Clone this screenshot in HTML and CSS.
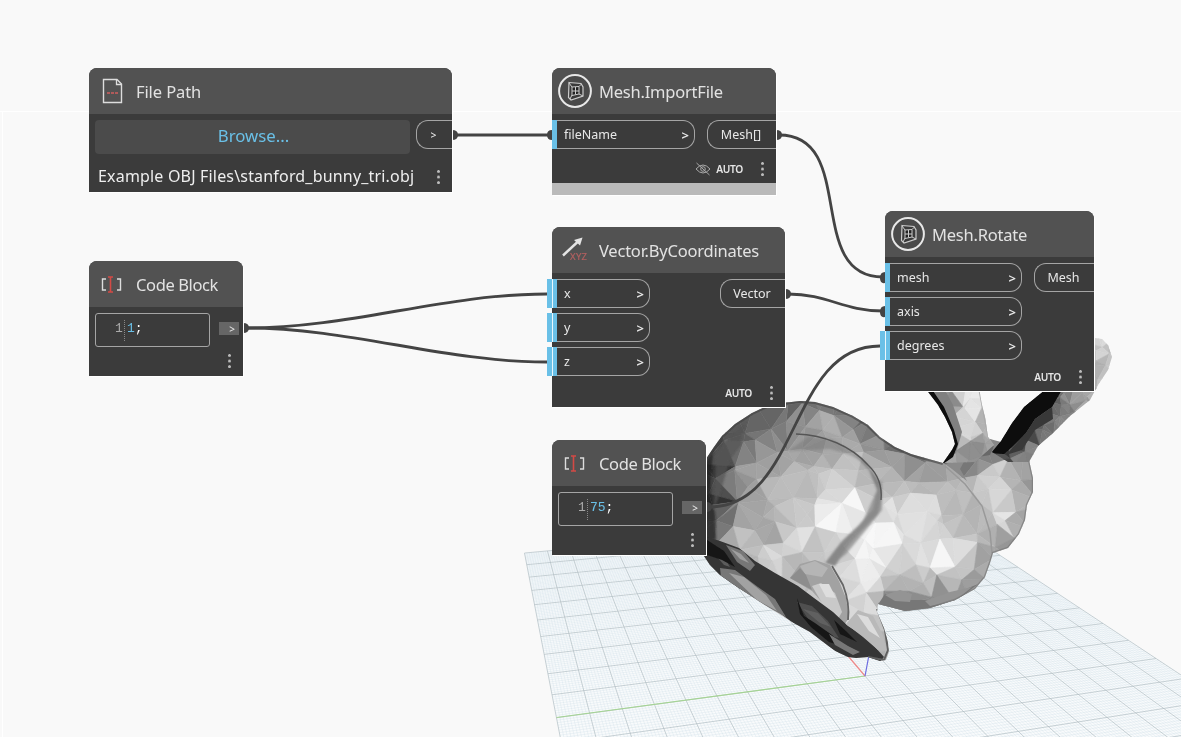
FILE: index.html
```html
<!DOCTYPE html>
<html lang="en">
<head>
<meta charset="utf-8">
<title>Mesh.Rotate</title>
<link rel="stylesheet" href="styles.css">
</head>
<body>
<main class="workspace">
  <svg class="scene" width="1181" height="737" viewBox="0 0 1181 737">
    <defs>
      <clipPath id="bodyClip"><path id="bodyPath" d="M704 462 714 447 722 436 735 424 752 413 767 406 783 403 800 401 815 402 833 407 853 416 868 425 880 437 895 447 911 454 925 458 943 463 952 450 957 446 975 442 990 439 1001 442 1015 440 1035 450 1029 460 1033 478 1033 492 1027 505 1025 520 1019 534 1008 548 993 553 990 563 985 577 975 589 955 600 930 608 905 611 890 607 878 604 877 612 884 628 888 642 889 652 886 660 880 661 868 657 856 658 848 657 835 651 810 632 790 621 760 602 740 589 720 575 710 565 704 556Z"/></clipPath>
      <clipPath id="earLClip"><path d="M925 388 979 388 982 405 985 417 988 437 994 445 975 462 943 463 952 450 955 444 952 432 945 417 938 405Z"/></clipPath>
      <clipPath id="earRClip"><path d="M1095 338 1102 339 1108 345 1112 357 1108 370 1098 385 1090 400 1070 416 1052 434 1038 446 1029 462 1008 462 992 452 1001 441 1012 423 1024 407 1045 390 1070 365Z"/></clipPath>
      <filter id="soft"><feGaussianBlur stdDeviation="0.55"/></filter>
      <filter id="softer"><feGaussianBlur stdDeviation="1.3"/></filter>
    </defs>
    <g class="guides"><path d="M0 111.5H1181M2.500 111V737"/></g>
    <g id="grid"></g>
    <g class="axes"><path class="axis-y" d="M865 676 556.500 717.500"/><path class="axis-x" d="M865 676 843 650"/><path class="axis-z" d="M865 676 869 655"/></g>
    <g filter="url(#soft)">
      <g id="body" clip-path="url(#bodyClip)"></g>
      <g clip-path="url(#bodyClip)">
        <g filter="url(#softer)">
          <path fill="#222" opacity=".75" d="M704 464 713 450 711 475 710 500 715 512 716 540 704 540Z"/>
          <path fill="#555" opacity=".7" d="M716 455 730 436 745 423 741 445 730 460 722 487 714 510Z"/>
          <path fill="#777" opacity=".45" d="M788 451 808 437 832 439 853 452 869 465 850 455 830 449Z"/>
          <path fill="#777" opacity=".8" d="M852 452 866 463 880 482 882 493 878 514 862 530 848 546 835 566 825 563 842 541 858 526 873 509 877 490 869 470Z"/>
          <path fill="#8b8b8b" opacity=".75" d="M878 488 882 480 882 510 866 530 846 554 832 565 858 532Z"/>
        </g>
        <path class="crease" d="M796 434C825 435 851 446 868 465Q883 479 881 500"/>
        <path fill="#a2a2a2" d="M790 578 800 564 815 560 830 565 839 581 846 598 849 618 842 628 829 610 812 591Z"/>
        <path fill="#b5b5b5" d="M800 566 815 561 828 568 822 577 805 574Z"/>
        <path fill="#8d8d8d" d="M790 578 800 568 806 575 812 590Z"/>
        <path fill="#c9c9c9" d="M812 586 821 583 835 593 842 612 838 619 822 603Z"/>
        <path fill="#dedede" d="M819 584 829 584 836 598 826 597Z"/>
        <path fill="none" stroke="#666" stroke-width="1.800" d="M832 566 843 585Q850 603 848 620"/>
        <path fill="#777" d="M879 603 885 594 907 600 940 600 978 584 955 602 930 610 905 613 878 609Z"/>
        <path fill="#949494" d="M885 595 900 590 912 594 910 602 895 601ZM925 601 950 592 972 587 955 601 930 606Z"/>
        <path fill="#343434" d="M704 536 720 541 739 548 755 561 775 573 798 586 814 598 833 612 848 626 867 638 884 657 879 663 848 659 808 634 777 611 755 598 720 577 704 564Z"/>
        <path fill="#777" d="M726 545 743 551 755 565 750 571 737 562Z"/>
        <path fill="#a0a0a0" d="M731 549 741 554 749 563 740 559Z"/>
        <path fill="#777" d="M720 568 735 570 758 587 775 599 786 617 764 605 740 589 721 577Z"/>
        <path fill="#a2a2a2" d="M729 573 744 577 766 595 777 611 757 600Z"/>
        <path fill="#5b5b5b" d="M709 548 719 549 730 567 724 565Z"/>
        <path fill="#4f4f4f" d="M797 602 812 606 828 621 839 638 828 636 812 625Z"/>
        <path fill="#606060" d="M803 609 818 613 831 627 820 623Z"/>
        <path fill="#171717" d="M704 538 724 551 735 567 722 560 704 554ZM797 598 800 614 811 627 829 642 843 646 832 635 815 623 804 616ZM834 620 848 633 857 642 840 634Z"/>
        <path fill="#777" d="M829 634 848 646 860 652 853 655 835 645Z"/>
        <path fill="#b9b9b9" d="M846 624 858 610 873 616 883 635 887 651 878 650 863 637Z"/>
        <path fill="#dcdcdc" d="M857 614 868 617 880 638 869 631Z"/>
        <path fill="none" stroke="#606060" stroke-width="2" d="M877 609 885 630 888 650 884 660 868 657"/>
        <path fill="#686868" d="M943 463 959 451 994 446 990 455 966 459 950 466Z"/>
        <path fill="#8a8a8a" d="M945 464 966 458 960 469 967 481 952 469Z"/>
        <path fill="none" stroke="#999" stroke-width="1.500" d="M945 466 965 484 982 506 990 532 992 553"/>
        <path class="outline" d="M704 462 714 447 722 436 735 424 752 413 767 406 783 403 800 401 815 402 833 407 853 416 868 425 880 437 895 447 911 454 925 458 943 463"/>
        <path class="rim" d="M1029 460 1033 478 1033 492 1027 505 1025 520 1019 534 1008 548 993 553 990 563 985 577 975 589 955 600 930 608 905 611 890 607 878 604"/>
      </g>
      <g id="earL" clip-path="url(#earLClip)"></g>
      <g clip-path="url(#earLClip)">
        <path fill="#808080" d="M925 388 944 388 953 405 962 432 956 453 943 463Z"/>
        <path fill="#0b0b0b" d="M925 388 931 388 944 407 954 430 958 444 953 457 940 466 950 444 938 405Z"/>
        <path fill="none" stroke="#aaa" stroke-width="3" d="M980 390 985 417 989 437 996 446"/>
      </g>
      <g id="earR" clip-path="url(#earRClip)"></g>
      <g clip-path="url(#earRClip)">
        <path fill="#0a0a0a" d="M990 453 1001 441 1012 423 1024 407 1045 388 1063 388 1052 407 1035 419 1026 433 1013 446 1004 454Z"/>
        <path fill="#383838" d="M1035 419 1052 407 1053 419 1035 430 1022 450 1006 455 1026 433Z"/>
      </g>
    </g>
    <g class="wires">
      <path d="M455 135H550"/>
      <path d="M779 135C858 135 804 277 883 277"/>
      <path d="M247 328C351 328 443 294 547 294"/>
      <path d="M247 328C351 328 443 362 547 362"/>
      <path d="M788 294C828 294 843 311 883 311"/>
      <path d="M709 507C801 507 788 346 880 346"/>
    </g>
    <g class="plugs">
      <path d="M452 130Q458 130 458 135T452 140ZM776 130Q782 130 782 135T776 140ZM243 323Q249 323 249 328T243 333ZM785 289Q791 289 791 294T785 299ZM552 130Q547 130 547 135T552 140ZM885 272Q880 272 880 278T885 283ZM885 306Q880 306 880 312T885 317ZM706 502Q712 502 712 507T706 512Z"/>
    </g>
  </svg>

  <section class="node file-path">
    <header class="head">
      <svg class="icon" width="34" height="34" viewBox="0 0 34 34"><path d="M8.500 5.500H22L26.500 10V28.500H8.500Z" fill="none" stroke="#ddd" stroke-width="1.400"/><path d="M21.500 6V10.500H26.500" fill="none" stroke="#ddd" stroke-width="1.300"/><path d="M12 19h3m1 0h3m1 0h3" stroke="#b05a5a" stroke-width="1.800"/></svg>
      <h2 class="title t-file">File Path</h2>
    </header>
    <div class="row browse-row"><button class="browse">Browse...</button><span class="port out tiny">&gt;</span></div>
    <div class="path-row"><span class="path">Example OBJ Files\stanford_bunny_tri.obj</span><i class="dots"></i></div>
  </section>

  <section class="node import-file">
    <header class="head">
      <svg class="icon" width="34" height="34" viewBox="0 0 34 34"><use href="#meshIcon"/></svg>
      <h2 class="title t-import">Mesh.ImportFile</h2>
    </header>
    <div class="row ports"><div class="ins"><span class="port in w143">fileName<b>&gt;</b></span></div><span class="port out w69">Mesh[]</span></div>
    <footer class="foot">
      <svg width="16" height="14" viewBox="0 0 16 14"><path d="M1 7Q8-1 15 7Q8 15 1 7ZM1.500 1 14.500 13" fill="none" stroke="#aaa"/><circle cx="8" cy="7" r="2.300" fill="none" stroke="#aaa"/></svg>
      <span class="auto">AUTO</span><i class="dots"></i>
    </footer>
    <div class="strip"></div>
  </section>

  <section class="node code one">
    <header class="head">
      <svg class="icon" width="34" height="34" viewBox="0 0 34 34"><use href="#codeIcon"/></svg>
      <h2 class="title t-code">Code Block</h2>
    </header>
    <div class="row code-row"><div class="editor"><span class="ln">1</span><span class="src"><em>1</em>;</span></div><span class="stub">&gt;</span></div>
    <footer class="foot"><i class="dots"></i></footer>
  </section>

  <section class="node vector">
    <header class="head">
      <svg class="icon" width="34" height="34" viewBox="0 0 34 34"><path d="M5 22.500 19.500 9" stroke="#e4e4e4" stroke-width="2.400"/><path d="M24.500 4.500 22 12.500 16 7Z" fill="#e4e4e4"/><text x="12" y="26.500" class="xyz" textLength="17">XYZ</text></svg>
      <h2 class="title t-vector">Vector.ByCoordinates</h2>
    </header>
    <div class="row ports">
      <div class="ins"><span class="port in open w98">x<b>&gt;</b></span><span class="port in open w98">y<b>&gt;</b></span><span class="port in open w98">z<b>&gt;</b></span></div>
      <span class="port out w65">Vector</span>
    </div>
    <footer class="foot"><span class="auto">AUTO</span><i class="dots"></i></footer>
  </section>

  <section class="node code two">
    <header class="head">
      <svg class="icon" width="34" height="34" viewBox="0 0 34 34"><use href="#codeIcon"/></svg>
      <h2 class="title t-code">Code Block</h2>
    </header>
    <div class="row code-row"><div class="editor"><span class="ln">1</span><span class="src"><em>75</em>;</span></div><span class="stub">&gt;</span></div>
    <footer class="foot"><i class="dots"></i></footer>
  </section>

  <section class="node rotate">
    <header class="head">
      <svg class="icon" width="34" height="34" viewBox="0 0 34 34"><use href="#meshIcon"/></svg>
      <h2 class="title t-rotate">Mesh.Rotate</h2>
    </header>
    <div class="row ports">
      <div class="ins"><span class="port in w137">mesh<b>&gt;</b></span><span class="port in w137">axis<b>&gt;</b></span><span class="port in open w137">degrees<b>&gt;</b></span></div>
      <span class="port out w60">Mesh</span>
    </div>
    <footer class="foot"><span class="auto">AUTO</span><i class="dots"></i></footer>
  </section>
</main>
<svg width="0" height="0" class="symbols">
  <symbol id="meshIcon" viewBox="0 0 34 34"><circle cx="17" cy="17" r="15.900" fill="#4a4a4a" stroke="#e8e8e8" stroke-width="2"/><path d="M11 8.500 23 9.500 25 13V22L13 26 10.500 23.500Z" fill="#3a3a3a" stroke="#ccc" stroke-width="1.200"/><path d="M14 13 21 12.500V20L14 21.500Z" fill="#222" stroke="#ccc"/><path d="M11 9 14 13M21 12.500 23.500 10M14 21 12 25M21 20 25 22M17.500 13V20.500M14 17H21" fill="none" stroke="#ccc"/></symbol>
  <symbol id="codeIcon" viewBox="0 0 34 34"><path d="M11 12H7.500V23H11M22 12H25.500V23H22" fill="none" stroke="#ddd" stroke-width="1.400"/><path d="M15.500 10V25M13 10H18M13 25H18" stroke="#d34a45" stroke-width="1.600"/></symbol>
</svg>
<script src="scene.js"></script>
</body>
</html>
```
FILE: styles.css
```css
* { box-sizing: border-box; }
body { margin: 0; background: #f9f9f9; font-family: "Noto Sans", sans-serif; color: #e6e6e6; }
.workspace { position: relative; width: 1181px; height: 737px; overflow: hidden; }
.symbols { position: absolute; }
.scene { display: block; }
.guides path { fill: none; stroke: #fff; stroke-width: 1; }
.axes path { fill: none; stroke-width: 1.2; }
.axis-y { stroke: #a5d494; }
.axis-x { stroke: #f08a8a; }
.axis-z { stroke: #6c6ce0; }
.minor { fill: none; stroke: #c3d9e2; stroke-width: .5; opacity: .5; }
.major { fill: none; stroke: #a9b8be; stroke-width: .9; opacity: .7; }
.crease { fill: none; stroke: #555; stroke-width: 1.4; }
.outline { fill: none; stroke: #444; stroke-width: 4; opacity: .65; }
.rim { fill: none; stroke: #777; stroke-width: 2.5; opacity: .7; }
.wires path { fill: none; stroke: #444; stroke-width: 2.8; }
.plugs path { fill: #444; }

.node { position: absolute; display: flex; flex-direction: column; background: #3b3b3b; border-radius: 8px 8px 0 0; box-shadow: 1px 1px 0 #fff; }
.file-path { left: 89px; top: 68px; width: 363px; height: 124px; }
.import-file { left: 552px; top: 68px; width: 224px; height: 127px; }
.one { left: 89px; top: 261px; width: 154px; height: 115px; }
.vector { left: 552px; top: 227px; width: 233px; height: 180px; }
.two { left: 552px; top: 440px; width: 154px; height: 115px; }
.rotate { left: 885px; top: 211px; width: 209px; height: 180px; }

.head { display: flex; align-items: center; gap: 7px; height: 46px; padding: 0 6px; background: #525252; border-radius: 8px 8px 0 0; }
.icon { flex: none; }
.title { margin: 1px 0 0; font-size: 16.5px; font-weight: 400; line-height: 24px; letter-spacing: -.22px; white-space: nowrap; color: #e2e2e2; }
.t-file { letter-spacing: -.1px; }
.t-code { letter-spacing: -.38px; }
.xyz { font: 9.5px "Noto Sans", sans-serif; fill: #b36060; stroke: #b36060; stroke-width: .2; }

.row { display: flex; justify-content: space-between; align-items: flex-start; padding-top: 6px; }
.ins { display: flex; flex-direction: column; gap: 5px; }
.port { position: relative; display: flex; align-items: center; justify-content: space-between; height: 29px; border: 1px solid #a5a5a5; font-size: 12.5px; line-height: 16px; color: #e8e8e8; }
.port b { font-weight: 600; font-size: 13px; }
.in { padding: 0 5px 0 12px; border-left: 0; border-radius: 0 12px 12px 0; }
.in::before { content: ""; position: absolute; left: 0; top: -1px; width: 5px; height: 29px; background: #6ac0e7; }
.open::after { content: ""; position: absolute; left: -5px; top: -1px; width: 5px; height: 29px; background: #6ac0e7; border-right: 1px solid #e9f6fc; }
.out { justify-content: center; padding-right: 2px; border-right: 0; border-radius: 12px 0 0 12px; }
.w143 { width: 143px; } .w98 { width: 98px; } .w137 { width: 137px; }
.w69 { width: 69px; } .w65 { width: 65px; } .w60 { width: 60px; }
.tiny { width: 36px; font-size: 10.5px; font-weight: 500; }

.browse-row { padding-left: 6px; }
.browse { width: 315px; height: 34px; padding: 0 0 3px 2px; border: 0; border-radius: 4px; background: #4b4b4b; color: #6ac0e7; font: 16.8px "Noto Sans", sans-serif; }
.path-row { display: flex; align-items: center; justify-content: space-between; padding: 10px 12px 0 9px; }
.path { font-size: 16px; line-height: 24px; letter-spacing: .18px; white-space: nowrap; color: #eee; }
.path-row .dots { margin-top: 3px; }

.foot { display: flex; align-items: center; justify-content: flex-end; height: 14px; margin-top: 13px; padding-right: 12px; }
.auto { margin: 0 18px 0 5px; font-size: 10.2px; font-weight: 600; line-height: 14px; letter-spacing: -.3px; }
.dots { flex: none; width: 3px; height: 15px; background: radial-gradient(circle at 1.5px 1.5px, #bbb 1.1px, transparent 1.7px) 0 0 / 3px 5.6px; }
.strip { height: 12px; margin-top: auto; background: #bababa; }
.vector .foot, .rotate .foot { margin-top: 10px; }

.code-row { padding-left: 6px; padding-right: 4px; }
.editor { display: flex; width: 115px; height: 34px; padding: 6px 0 0 19px; border: 1px solid #a5a5a5; border-radius: 3px; font: 13px/18px "Liberation Mono", monospace; }
.ln { width: 9px; color: #aaa; }
.src { height: 21px; padding-left: 2px; border-left: 1px dotted #888; font-size: 13px; color: #fff; }
.src em { font-style: normal; color: #6ac0e7; }
.stub { display: flex; align-items: center; justify-content: flex-end; width: 20px; height: 13px; margin-top: 9px; padding-right: 4px; background: #666; font-size: 10px; font-weight: 500; }
.code .foot { margin-top: 7px; }
```
FILE: scene.js
```js
const NS = 'http://www.w3.org/2000/svg';
function add(parent, d, attrs) {
  const p = document.createElementNS(NS, 'path');
  p.setAttribute('d', d);
  for (const k in attrs) p.setAttribute(k, attrs[k]);
  parent.appendChild(p);
}

/* Ground plane, 20 x 20 cells in perspective */
function project(u, v) {
  const w = 1 + 0.00787 * u + 0.0424 * v;
  return ((865 + 35.23 * u + 19.29 * v) / w).toFixed(2) + ' ' + ((676 + 1.47 * u + 8.27 * v) / w).toFixed(2);
}
let minor = '', major = '';
for (let i = -100; i <= 100; i++) {
  const t = i / 10;
  const s = 'M' + project(t, -10) + 'L' + project(t, 10) + 'M' + project(-10, t) + 'L' + project(10, t);
  if (i % 10) minor += s; else major += s;
}
const grid = document.getElementById('grid');
add(grid, 'M' + project(-10, -10) + 'L' + project(10, -10) + 'L' + project(10, 10) + 'L' + project(-10, 10) + 'Z', { fill: '#f9fbfc' });
add(grid, minor, { class: 'minor' });
add(grid, major, { class: 'major' });

/* Faceted mesh: jittered points, Delaunay triangles, shade blended from samples */
let seed = 7;
function rnd() { seed = (seed * 16807) % 2147483647; return seed / 2147483647; }

function delaunay(pts) {
  const n = pts.length;
  const all = pts.concat([[-5000, -5000], [9000, -5000], [600, 12000]]);
  function circle(a, b, c) {
    const [ax, ay] = all[a], [bx, by] = all[b], [cx, cy] = all[c];
    const d = 2 * (ax * (by - cy) + bx * (cy - ay) + cx * (ay - by));
    const A = ax * ax + ay * ay, B = bx * bx + by * by, C = cx * cx + cy * cy;
    const x = (A * (by - cy) + B * (cy - ay) + C * (ay - by)) / d;
    const y = (A * (cx - bx) + B * (ax - cx) + C * (bx - ax)) / d;
    return { t: [a, b, c], x, y, r: (ax - x) ** 2 + (ay - y) ** 2 };
  }
  let tris = [circle(n, n + 1, n + 2)];
  for (let i = 0; i < n; i++) {
    const edges = new Map(), keep = [];
    for (const k of tris) {
      if ((all[i][0] - k.x) ** 2 + (all[i][1] - k.y) ** 2 < k.r) {
        for (let e = 0; e < 3; e++) {
          const a = k.t[e], b = k.t[(e + 1) % 3], key = Math.min(a, b) + '_' + Math.max(a, b);
          if (edges.has(key)) edges.delete(key); else edges.set(key, [a, b]);
        }
      } else keep.push(k);
    }
    for (const [a, b] of edges.values()) keep.push(circle(a, b, i));
    tris = keep;
  }
  return tris.map(k => k.t).filter(t => t.every(i => i < n));
}

function facets(id, box, step, noise, samples) {
  const pts = [];
  let row = 0;
  for (let y = box[1]; y <= box[3]; y += step * 0.85, row++)
    for (let x = box[0] + (row % 2) * step / 2; x <= box[2]; x += step)
      pts.push([x + (rnd() - .5) * step * .8, y + (rnd() - .5) * step * .8]);
  const g = document.getElementById(id);
  for (const t of delaunay(pts)) {
    const p = t.map(i => pts[i]);
    const cx = (p[0][0] + p[1][0] + p[2][0]) / 3, cy = (p[0][1] + p[1][1] + p[2][1]) / 3;
    let s = 0, w = 0;
    for (const [x, y, v] of samples) {
      const k = 1 / (((x - cx) ** 2 + (y - cy) ** 2) ** 1.8 + 20);
      s += k * v; w += k;
    }
    const v = Math.max(0, Math.min(250, Math.round(s / w + (rnd() - .5) * noise)));
    const c = 'rgb(' + v + ',' + v + ',' + v + ')';
    add(g, 'M' + p.map(q => q[0].toFixed(1) + ' ' + q[1].toFixed(1)).join('L') + 'Z', { fill: c, stroke: c, 'stroke-width': .6 });
  }
}

facets('body', [680, 375, 1060, 685], 20, 16, [
  [720,440,65],[740,425,85],[765,410,95],[800,404,100],[835,410,110],[865,425,105],[890,447,110],[920,458,115],
  [740,450,108],[770,435,125],[800,425,148],[830,425,180],[855,435,155],[880,450,150],[900,460,160],[930,470,160],
  [730,480,120],[712,470,55],[712,500,50],[750,465,165],[780,455,165],[810,445,155],[840,450,175],[860,465,195],
  [780,480,188],[810,480,190],[840,485,212],[868,485,188],[850,500,242],[830,520,240],[845,510,238],[800,510,195],
  [770,510,175],[740,500,160],[765,530,160],[745,540,190],[720,520,110],[800,540,218],[780,555,212],[820,545,200],
  [895,495,190],[890,510,225],[880,540,250],[905,515,222],[870,560,240],[865,585,235],[895,570,200],[885,600,130],
  [910,605,130],[940,600,140],[970,585,150],[985,565,165],[935,562,242],[960,550,222],[920,545,218],[925,510,222],
  [950,500,192],[970,510,185],[985,530,178],[940,480,182],[930,582,185],[960,575,190],[960,455,100],[975,460,120],
  [1000,455,130],[985,480,210],[1000,490,218],[1003,520,225],[1020,480,185],[1030,485,150],[1020,515,170],[1005,542,150],
  [1000,468,208],[1015,465,160],[805,570,180],[825,580,205],[850,600,212],[870,600,218],[870,625,200],[885,645,180]
]);
facets('earL', [920, 380, 1000, 470], 13, 14, [
  [950,400,140],[960,400,215],[970,395,232],[975,410,225],[970,430,220],[982,420,180],[975,448,140],[990,446,160]
]);
facets('earR', [985, 330, 1120, 470], 11, 30, [
  [1100,345,205],[1108,358,195],[1100,375,185],[1085,398,165],[1070,395,145],[1055,402,100],[1065,415,130],
  [1045,430,110],[1030,435,80],[1020,445,75],[1035,447,125],[1020,458,125],[1005,455,70]
]);
```
